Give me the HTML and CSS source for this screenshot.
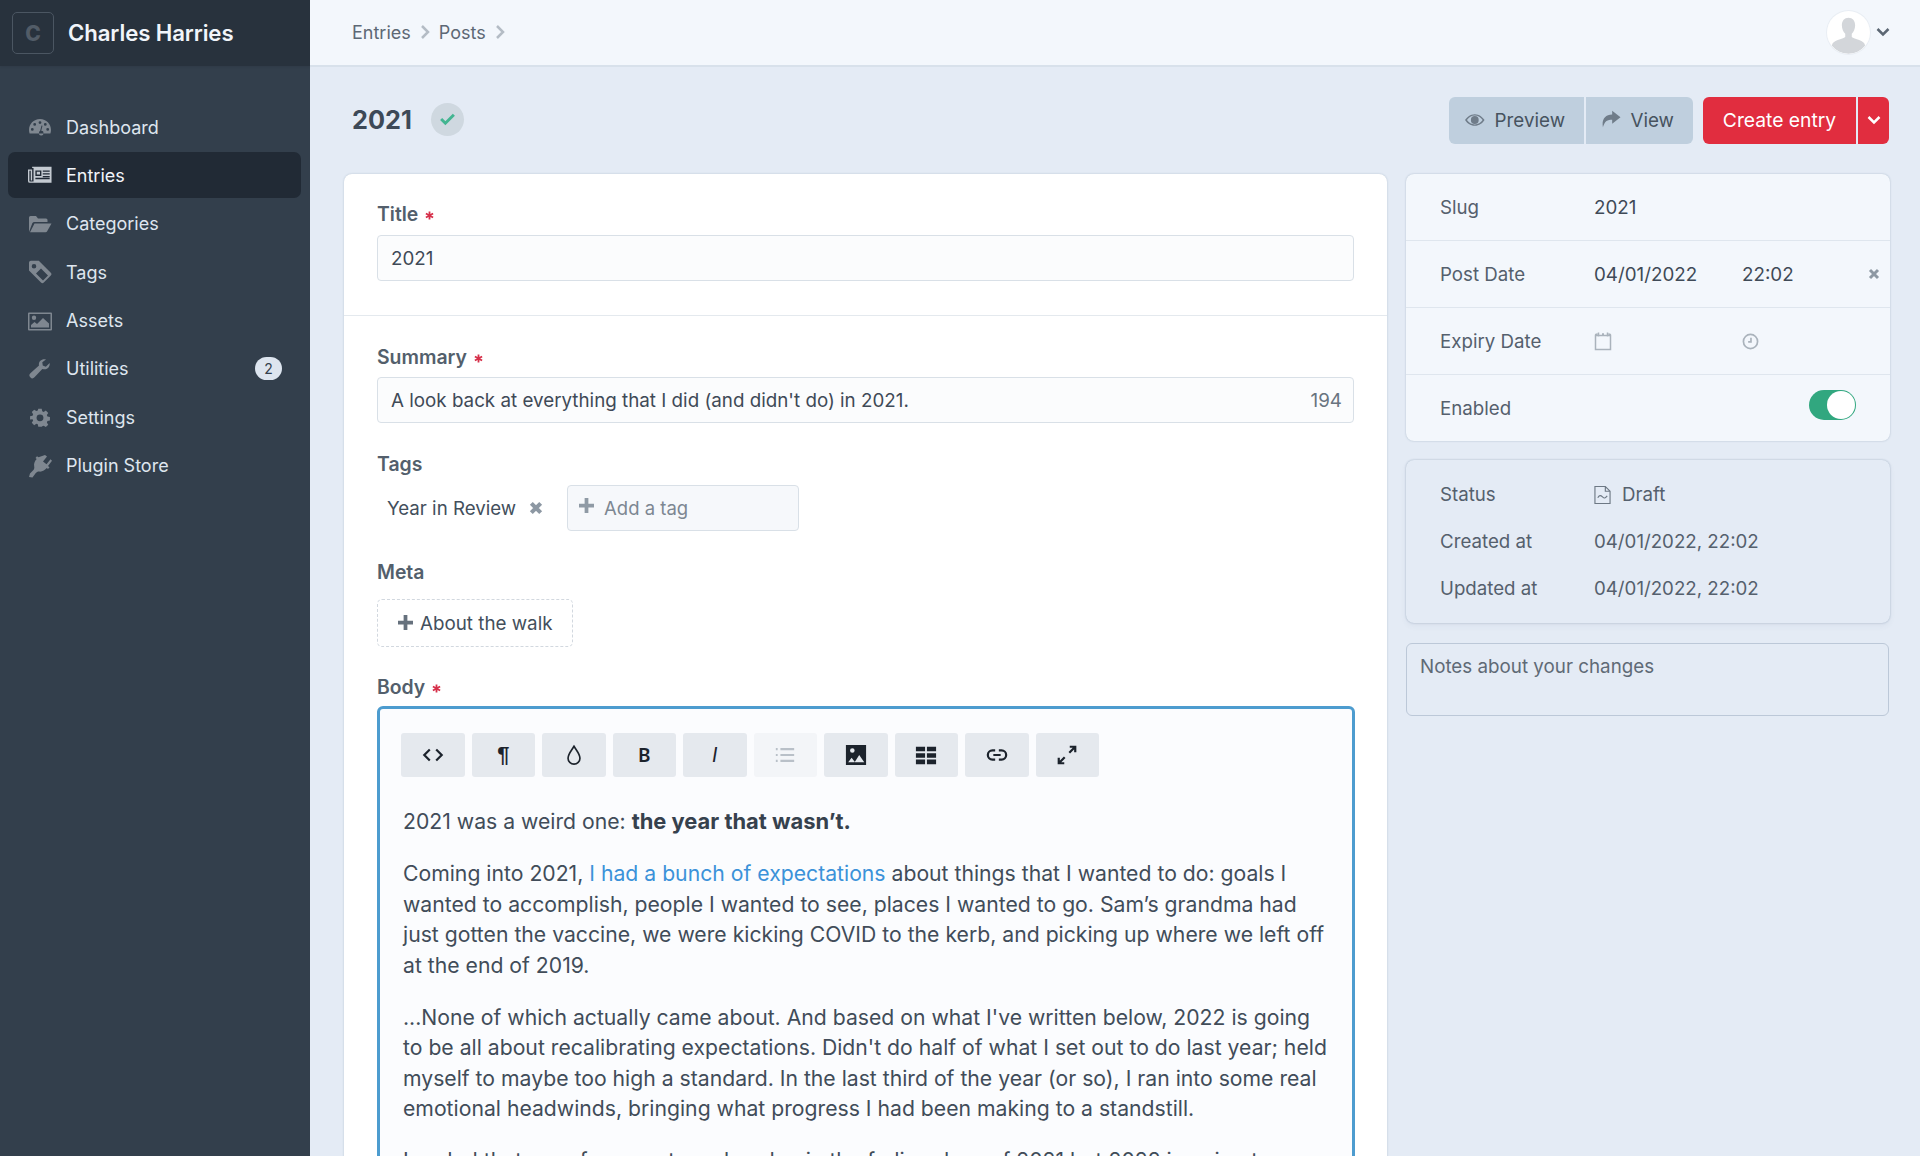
FILE: index.html
```html
<!DOCTYPE html>
<html lang="en">
<head>
<meta charset="utf-8">
<title>Charles Harries</title>
<link rel="stylesheet" href="styles.css">
</head>
<body>
<div class="app">
  <aside class="sidebar">
    <div class="brand">
      <span class="logo">C</span>
      <span class="brand-name">Charles Harries</span>
    </div>
    <nav class="nav">
      <a class="nav-item"><svg class="nav-icon" viewBox="0 0 24 24"><path fill-rule="evenodd" d="M12 4C5.500 4 1 9 1 15c0 1.300.2 2.500.6 3.500h20.800c.4-1 .6-2.200.6-3.500C23 9 18.500 4 12 4zM12 6.200a1.400 1.400 0 1 1 0 2.800 1.400 1.400 0 0 1 0-2.800zM6.700 8a1.400 1.400 0 1 1 0 2.800 1.400 1.400 0 0 1 0-2.800zM17.300 8a1.400 1.400 0 1 1 0 2.800 1.400 1.400 0 0 1 0-2.800zM4.300 13a1.400 1.400 0 1 1 0 2.800 1.400 1.400 0 0 1 0-2.800zM19.700 13a1.400 1.400 0 1 1 0 2.800 1.400 1.400 0 0 1 0-2.800zM13.500 10.500l1 .3-1.300 5a2.300 2.300 0 1 1-2.200 1.900 2.300 2.300 0 0 1 1.200-2z"/></svg><span>Dashboard</span></a>
      <a class="nav-item nav-active"><svg class="nav-icon nav-icon-on" viewBox="0 0 26 24"><path fill-rule="evenodd" d="M4.500 3h21v17.500H2A2 2 0 0 1 0 18.500V6h4.500zM6 4.500v14.500H2a.5.500 0 0 1-.5-.5V7.500H3V18h1.500V4.500zM8 7v6h6.500V7zm1.500 1.500V11.500H13V8.500zM16 7v1.500h7.500V7zm0 3v1.500h7.500V10zm0 3v1.500h7.500V13zM8 15v1.500h15.500V15z"/></svg><span>Entries</span></a>
      <a class="nav-item"><svg class="nav-icon" viewBox="0 0 24 24"><path d="M1 20V5.500A1.500 1.500 0 0 1 2.500 4h5.500l2 2.500h8A1.500 1.500 0 0 1 19.500 8v2H6.500a2.500 2.500 0 0 0-2.200 1.300z"/><path d="M6.500 11.500H23.500L19 19.500a1.500 1.500 0 0 1-1.300.8H2z"/></svg><span>Categories</span></a>
      <a class="nav-item"><svg class="nav-icon" viewBox="0 0 24 24"><path fill-rule="evenodd" d="M1 2.500v8l12 12a2 2 0 0 0 2.800 0l7-7a2 2 0 0 0 0-2.800l-12-12h-8A2 2 0 0 0 1 2.500zM6 4a2.300 2.300 0 1 1 0 4.600A2.300 2.300 0 0 1 6 4zM13 8.500l7 7-5 5-7-7z"/></svg><span>Tags</span></a>
      <a class="nav-item"><svg class="nav-icon" viewBox="0 0 24 24"><path fill-rule="evenodd" d="M1 3.500h22a1 1 0 0 1 1 1v16a1 1 0 0 1-1 1H1a1 1 0 0 1-1-1v-16a1 1 0 0 1 1-1zM1.500 5v15h21V5zM6 6.500a2.200 2.200 0 1 1 0 4.400A2.200 2.200 0 0 1 6 6.500zM3 18.500v-2.500l3.500-3 2.500 2 6-6 6 5.500v4z"/></svg><span>Assets</span></a>
      <a class="nav-item"><svg class="nav-icon" viewBox="-1 -1 26 26"><path d="M22.500 5.500c.3 2.500-.7 5-3 6.200-1.700.9-3.500.8-5 .2L6 21a3 3 0 0 1-4.500-.1 3 3 0 0 1 .1-4.300l9.300-8.400c-.4-1.800 0-3.700 1.500-5.100C14 1.500 16.500 1 18.500 1.800l-4 3 .5 3.500 3.300 1.300z"/></svg><span>Utilities</span><span class="badge">2</span></a>
      <a class="nav-item"><svg class="nav-icon" viewBox="-2 -2.500 28 28"><path fill-rule="evenodd" d="M10 2h4l.6 2.900 1.700.7 2.500-1.600 2.800 2.800-1.600 2.500.7 1.700 2.900.6v4l-2.900.6-.7 1.700 1.600 2.500-2.800 2.800-2.500-1.600-1.700.7L14 23h-4l-.6-2.900-1.700-.7-2.500 1.600-2.800-2.800 1.600-2.500-.7-1.700L.4 14.500v-4l2.900-.6.700-1.700L2.400 5.800 5.200 3l2.500 1.600 1.700-.7zM12 8.500a4 4 0 1 0 0 8 4 4 0 0 0 0-8z"/></svg><span>Settings</span></a>
      <a class="nav-item"><svg class="nav-icon" viewBox="0 0 24 24"><path d="M17 1l2 1.500-4 5 3.500 2.800 4-5L24 6.800l-4 5.200 1.500 1.200-1.500 1.800-1.200-.9c-1.800 2-4.500 3.800-7.500 3.500-1.500-.1-2.500.4-3.700 1.700L4.500 23.500 1 23l1-3.500 3.200-3.300c1-1.200 1.300-2.300 1-3.800-.6-2.800.6-5.400 2.500-7.400L7.500 4l1.500-1.800 1.500 1.100z"/></svg><span>Plugin Store</span></a>
    </nav>
  </aside>

  <div class="main">
    <header class="topbar">
      <div class="crumbs">
        <span>Entries</span>
        <svg class="crumb-sep" viewBox="0 0 10 16"><path d="M2 2l6 6-6 6"/></svg>
        <span>Posts</span>
        <svg class="crumb-sep" viewBox="0 0 10 16"><path d="M2 2l6 6-6 6"/></svg>
      </div>
      <div class="user">
        <span class="avatar"><svg viewBox="0 0 42 42"><path d="M21 6.500c4 0 6.500 3 6.500 7.500 0 3.500-1.500 6.500-3.300 8.300v3.200c2 2 13 3 13 8.500a20.800 20.800 0 0 1-32.400 0c0-5.500 11-6.500 13-8.500v-3.200c-1.800-1.800-3.300-4.800-3.300-8.300 0-4.500 2.500-7.500 6.500-7.500z"/></svg></span>
        <svg class="user-caret" viewBox="0 0 14 10"><path d="M1.500 2l5.500 5.500L12.500 2"/></svg>
      </div>
    </header>

    <div class="content">
      <div class="head">
        <div class="head-title">
          <h1>2021</h1>
          <span class="status-dot"><svg viewBox="0 0 20 16"><path d="M2.500 8l5 5 10-10"/></svg></span>
        </div>
        <div class="actions">
          <div class="btn-group">
            <button class="btn btn-soft"><svg class="btn-eye" viewBox="0 0 20 14"><path fill-rule="evenodd" d="M10 1C5.500 1 2 4 0 7c2 3 5.500 6 10 6s8-3 10-6c-2-3-5.500-6-10-6zM10 2.500c3.300 0 6.200 1.900 8 4.500-1.800 2.600-4.700 4.500-8 4.500S3.800 9.600 2 7c1.800-2.600 4.700-4.500 8-4.500zM10 3a4 4 0 1 0 0 8 4 4 0 0 0 0-8z"/></svg>Preview</button>
            <button class="btn btn-soft btn-view"><svg class="btn-share" viewBox="0 0 20 18"><path d="M11 0l9 7-9 7V9.800C6 9.800 3 11 1 18c-1.500-8 2-13.800 10-13.800z"/></svg>View</button>
          </div>
          <div class="btn-group">
            <button class="btn btn-red">Create entry</button>
            <button class="btn btn-red btn-caret"><svg viewBox="0 0 14 10"><path d="M1.500 2l5.500 5.500L12.500 2"/></svg></button>
          </div>
        </div>
      </div>

      <div class="columns">
        <section class="card">
          <div class="section section-first">
            <label class="label">Title <svg class="req" viewBox="0 0 10 10"><path d="M5 .5v9M1 2.700l8 4.600M9 2.700l-8 4.600"/></svg></label>
            <div class="input">2021</div>
          </div>
          <div class="section">
            <div class="field">
              <label class="label">Summary <svg class="req" viewBox="0 0 10 10"><path d="M5 .5v9M1 2.700l8 4.600M9 2.700l-8 4.600"/></svg></label>
              <div class="input input-count"><span>A look back at everything that I did (and didn't do) in 2021.</span><span class="count">194</span></div>
            </div>
            <div class="field">
              <label class="label label-tags">Tags</label>
              <div class="tag-row">
                <span class="tag">Year in Review <svg class="x-icon" viewBox="0 0 12 12"><path d="M2 2l8 8M10 2l-8 8"/></svg></span>
                <span class="tag-input"><svg class="plus" viewBox="0 0 14 14"><path d="M7 0v14M0 7h14"/></svg>Add a tag</span>
              </div>
            </div>
            <div class="field field-meta">
              <label class="label label-meta">Meta</label>
              <button class="add-set"><svg class="plus plus-dark" viewBox="0 0 14 14"><path d="M7 0v14M0 7h14"/></svg>About the walk</button>
            </div>
            <div class="field">
              <label class="label label-body">Body <svg class="req" viewBox="0 0 10 10"><path d="M5 .5v9M1 2.700l8 4.600M9 2.700l-8 4.600"/></svg></label>
              <div class="editor">
                <div class="toolbar">
                  <span class="tool"><svg viewBox="0 0 24 24"><path class="st" d="M8.500 6l-6 6 6 6M15.500 6l6 6-6 6"/></svg></span>
                  <span class="tool tool-text">¶</span>
                  <span class="tool"><svg viewBox="0 0 24 24"><path class="st st-thin" d="M12 2.500c3 5 6.500 8.500 6.500 13a6.500 6.500 0 0 1-13 0c0-4.500 3.500-8 6.500-13z"/></svg></span>
                  <span class="tool tool-b">B</span>
                  <span class="tool tool-i">I</span>
                  <span class="tool tool-off"><svg viewBox="0 0 24 24"><path class="st st-off" d="M7 5.500h15M7 12h15M7 18.500h15M2 5.500h2M2 12h2M2 18.500h2"/></svg></span>
                  <span class="tool"><svg viewBox="0 0 24 24"><path class="fl" fill-rule="evenodd" d="M1 1h22v22H1zM8 4.500a2.500 2.500 0 1 0 0 5 2.500 2.500 0 0 0 0-5zM7.200 15L3.500 20h7.500zM15.500 12l-5 8h10.500z"/></svg></span>
                  <span class="tool"><svg viewBox="0 0 24 24"><path class="fl" d="M1 3h10v5H1zM13 3h10v5H13zM1 10h10v5H1zM13 10h10v5H13zM1 17h10v5H1zM13 17h10v5H13z"/></svg></span>
                  <span class="tool"><svg viewBox="0 0 24 24"><path class="st" d="M10 7H7a5 5 0 0 0 0 10h3M14 7h3a5 5 0 0 1 0 10h-3M8 12h8"/></svg></span>
                  <span class="tool"><svg viewBox="0 0 24 24"><path class="st" d="M14.500 9.500L21 3M15 3h6v6M9.500 14.500L3 21M3 15v6h6"/></svg></span>
                </div>
                <div class="prose">
                  <p>2021 was a weird one: <strong>the year that wasn’t.</strong></p>
                  <p>Coming into 2021, <a>I had a bunch of expectations</a> about things that I wanted to do: goals I wanted to accomplish, people I wanted to see, places I wanted to go. Sam’s grandma had just gotten the vaccine, we were kicking COVID to the kerb, and picking up where we left off at the end of 2019.</p>
                  <p>...None of which actually came about. And based on what I've written below, 2022 is going to be all about recalibrating expectations. Didn't do half of what I set out to do last year; held myself to maybe too high a standard. In the last third of the year (or so), I ran into some real emotional headwinds, bringing what progress I had been making to a standstill.</p>
                  <p>I ended that run of momentum abandon in the fading days of 2021 but 2022 is going to</p>
                </div>
              </div>
            </div>
          </div>
        </section>

        <aside class="side">
          <div class="side-card">
            <div class="side-row"><span class="side-label">Slug</span><span class="side-value">2021</span></div>
            <div class="side-row">
              <span class="side-label">Post Date</span>
              <span class="side-value side-date">04/01/2022</span>
              <span class="side-value side-time">22:02</span>
              <svg class="x-icon x-date" viewBox="0 0 12 12"><path d="M2 2l8 8M10 2l-8 8"/></svg>
            </div>
            <div class="side-row">
              <span class="side-label">Expiry Date</span>
              <span class="side-date"><svg class="mini" viewBox="0 0 18 20"><path d="M1.500 4.500h15v14h-15zM1.500 4.500c0-1.500 1-1.500 2-1.500M16.500 4.500c0-1.500-1-1.500-2-1.500M4.500 1.500v4M8 3h2M13.500 1.500v4"/></svg></span>
              <span class="side-time"><svg class="mini mini-clock" viewBox="0 0 18 18"><circle cx="9" cy="9" r="7.500"/><path d="M9.500 5v4.500H6.500"/></svg></span>
            </div>
            <div class="side-row side-row-last">
              <span class="side-label">Enabled</span>
              <span class="toggle"><span class="knob"></span></span>
            </div>
          </div>
          <div class="meta-card">
            <div class="meta-row"><span class="side-label">Status</span><span class="draft"><svg class="draft-icon" viewBox="0 0 18 20"><path d="M1 1h11l5 5v13H1zM12 1v5h5M4 13c1.500-3 3-3 5-1s3 1.500 5-1"/></svg>Draft</span></div>
            <div class="meta-row"><span class="side-label">Created at</span><span>04/01/2022, 22:02</span></div>
            <div class="meta-row"><span class="side-label">Updated at</span><span>04/01/2022, 22:02</span></div>
          </div>
          <div class="notes">Notes about your changes</div>
        </aside>
      </div>
    </div>
  </div>
</div>
</body>
</html>
```
FILE: styles.css
```css
* { box-sizing: border-box; }
html, body { margin: 0; height: 100%; overflow: hidden; }
body {
  font-family: Inter, "Noto Sans", "Liberation Sans", sans-serif;
  font-size: 18.800px;
  color: #434f5c;
  background: #e4ebf5;
}
.app { display: flex; height: 100vh; overflow: hidden; }

/* Sidebar */
.sidebar { width: 310px; flex: none; background: #333f4c; color: #dfe6ef; }
.brand {
  height: 66px; display: flex; align-items: center; gap: 14px;
  padding: 0 0 2px 12px; background: #28323d; box-shadow: 0 1px 2px rgba(0,0,0,.08);
}
.logo {
  width: 42px; height: 42px; border: 1.500px solid #4b5662; border-radius: 5px; margin-top: 2px;
  display: flex; align-items: center; justify-content: center;
  color: #525c67; font-size: 21px; font-weight: 800;
}
.brand-name { font-size: 22.200px; font-weight: 600; color: #f1f5fa; letter-spacing: -.1px; }
.nav { display: flex; flex-direction: column; gap: 2.400px; padding: 38px 9px 0 8px; }
.nav-item {
  height: 46px; display: flex; align-items: center; gap: 14px;
  padding: 0 20px; border-radius: 7px; font-size: 18px;
}
.nav-active { background: #212a35; color: #f1f5fa; }
.nav-icon { width: 24px; height: 24px; flex: none; fill: #7f8790; }
.nav-icon-on { fill: #c4cad1; }
.badge {
  margin-left: auto; margin-right: -1px; width: 27px; height: 23px; border-radius: 12px;
  background: #dde5ef; color: #333f4c; font-size: 14px;
  display: flex; align-items: center; justify-content: center;
}

/* Top bar */
.main { flex: 1; min-width: 0; }
.topbar {
  height: 67px; display: flex; align-items: center; justify-content: space-between;
  padding: 0 30px 1px 42px; background: #f3f7fc; border-bottom: 2px solid #d8e1eb;
}
.crumbs { display: flex; align-items: center; gap: 9px; color: #5d6875; font-size: 18px; }
.crumb-sep { width: 10px; height: 16px; fill: none; stroke: #b4bcc5; stroke-width: 2.500; }
.user { display: flex; align-items: center; gap: 6px; }
.avatar {
  width: 43px; height: 43px; border-radius: 50%; background: #fff; overflow: hidden;
  box-shadow: 0 0 0 1px #e9eef4; display: block;
}
.avatar svg { display: block; width: 100%; height: 100%; fill: #d3d6da; }
.user-caret { width: 14px; height: 10px; fill: none; stroke: #5c6773; stroke-width: 2.500; }

/* Content */
.content { padding: 30px 30px 0 34px; }
.head { display: flex; justify-content: space-between; align-items: center; padding-left: 8px; height: 46px; }
.head-title { display: flex; align-items: center; gap: 19px; margin-top: -2px; }
h1 { margin: 0; font-size: 25.300px; font-weight: 700; color: #3d4957; }
.status-dot {
  width: 33px; height: 33px; border-radius: 50%; background: #cfd8e0;
  display: flex; align-items: center; justify-content: center;
}
.status-dot svg { width: 17px; height: 14px; fill: none; stroke: #43b591; stroke-width: 3.500; }
.actions { display: flex; gap: 10px; margin-right: 1px; }
.btn-group { display: flex; gap: 2px; }
.btn {
  height: 47px; border: 0; font: inherit; display: flex; align-items: center; cursor: pointer;
}
.btn-soft { background: #bfcfde; color: #47535f; border-radius: 6px 0 0 6px; padding: 0 19px 0 16px; gap: 10px; width: 135px; }
.btn-view { border-radius: 0 6px 6px 0; width: 107px; gap: 10px; padding-left: 16px; }
.btn-eye { width: 20px; height: 14px; fill: #6f7c89; }
.btn-share { width: 20px; height: 18px; margin-top: -2px; fill: #6f7c89; }
.btn-red { background: #e12d3f; color: #fff; border-radius: 6px 0 0 6px; width: 153px; justify-content: center; font-size: 19.300px; }
.btn-caret { border-radius: 0 6px 6px 0; width: 31px; }
.btn-caret svg { width: 14px; height: 10px; fill: none; stroke: #fff; stroke-width: 2.500; }

.columns { display: grid; grid-template-columns: 1043px 484px; gap: 19px; margin-top: 31px; align-items: start; }

/* Main card */
.card {
  background: #fff; border-radius: 8px; box-shadow: 0 0 2px rgba(60,90,120,.3);
  height: 1100px;
}
.section { padding: 28px 33px 0; }
.section-first { padding-top: 27px; padding-bottom: 34px; border-bottom: 1px solid #e4e9ee; }
.label { display: flex; align-items: center; gap: 7px; height: 25px; margin-bottom: 8px; font-weight: 600; font-size: 19.400px; color: #535f6c; }
.section-first .label { margin-bottom: 9px; }
.label-tags { margin-bottom: 9px; }
.label-body { margin-bottom: 7px; }
.req { width: 9px; height: 9px; margin-top: 3px; fill: none; stroke: #d6304a; stroke-width: 2; }
.field { margin-bottom: 28px; }
.field-meta { margin-bottom: 27px; }
.field:last-child { margin-bottom: 0; }
.input {
  height: 46px; border: 1px solid #d9e0e7; border-radius: 4px; background: #fbfcfd;
  padding: 0 13px; display: flex; align-items: center; color: #3f4a57;
}
.input-count { justify-content: space-between; padding-right: 11px; }
.count { color: #69747f; }
.tag-row { display: flex; align-items: center; height: 46px; gap: 24px; }
.tag { display: flex; align-items: center; gap: 13px; padding-left: 10px; color: #434f5c; font-size: 18.700px; }
.x-icon { width: 14px; height: 14px; fill: none; stroke: #8d98a3; stroke-width: 3.500; }
.tag-input {
  width: 232px; height: 46px; border: 1px solid #d9e0e7; border-radius: 4px; background: #f6f8fb;
  display: flex; align-items: center; gap: 10px; padding-left: 11px; color: #7d8792; font-size: 18.500px;
}
.plus { width: 15px; height: 15px; margin-top: -5px; fill: none; stroke: #8f9aa5; stroke-width: 3.500; }
.plus-dark { stroke: #66717d; margin-top: -2px; }
.label-meta { margin-bottom: 15px; }
.add-set {
  width: 196px; height: 48px; border: 1.500px dashed #d2d8df; border-radius: 5px; background: #fff;
  display: flex; align-items: center; gap: 7px; padding: 0 0 0 20px; font: inherit; color: #434f5c;
}
.editor {
  width: 978px; border: 3px solid #4d9ccf; border-radius: 6px; background: #fbfcfe;
  padding: 24px 21px 0 23px; height: 600px;
}
.toolbar { display: flex; gap: 7px; margin-left: -2px; }
.tool {
  width: 63.500px; height: 44px; background: #e5e9ee; border-radius: 3px;
  display: flex; align-items: center; justify-content: center; color: #1c232c;
}
.tool svg { width: 22px; height: 22px; }
.tool-off { background: #f3f5f8; }
.tool-text { font-size: 22px; font-family: "Liberation Sans", sans-serif; font-weight: 700; }
.tool-b { font-size: 19px; font-family: "Noto Sans", sans-serif; font-weight: 600; }
.tool-i { font-style: italic; font-size: 20px; font-weight: 400; }
.st { fill: none; stroke: #1c232c; stroke-width: 2.400; }
.st-thin { stroke-width: 1.800; }
.st-off { stroke: #b9c0c8; stroke-width: 2.400; }
.fl { fill: #1c232c; }
.prose { margin-top: 29px; font-size: 21.200px; line-height: 30.500px; color: #414c59; }
.prose p { margin: 0 0 21.500px; }
.prose strong { font-weight: 700; font-size: 21.900px; color: #36414d; }
.prose a { color: #3b92d9; }

/* Side */
.side { display: flex; flex-direction: column; }
.side-card { background: #f3f7fc; border-radius: 8px; box-shadow: 0 0 2px rgba(60,90,120,.35); height: 267px; }
.side-row {
  height: 67px; display: flex; align-items: center; padding: 0 10px 0 34px;
  border-bottom: 1px solid #dfe6ee; position: relative;
}
.side-row-last { border-bottom: 0; height: 66px; justify-content: space-between; padding-right: 34px; }
.side-label { width: 154px; flex: none; color: #55606d; font-size: 18.700px; }
.side-value { color: #3f4a57; }
.side-date { width: 148px; flex: none; display: flex; }
.side-time { flex: 1; display: flex; }
.x-date { width: 12px; height: 12px; stroke-width: 3; }
.mini { width: 18px; height: 20px; fill: none; stroke: #aab3bc; stroke-width: 1.500; }
.mini-clock { width: 17px; height: 17px; stroke-width: 1.800; }
.toggle { width: 47px; height: 30px; background: #31a77f; border-radius: 15px; display: flex; justify-content: flex-end; padding: 1px; margin-top: -6px; }
.knob { width: 28px; height: 28px; background: #fff; border-radius: 50%; }
.meta-card {
  margin-top: 19px; height: 163px; border-radius: 8px; padding: 11px 0 0 34px;
  box-shadow: 0 0 2px rgba(60,90,120,.4), 0 3px 6px rgba(60,90,120,.06);
  font-size: 18.700px;
}
.meta-row { height: 47px; display: flex; align-items: center; color: #55606d; }
.draft { display: flex; align-items: center; gap: 11px; }
.draft-icon { width: 17px; height: 20px; fill: none; stroke: #6d7884; stroke-width: 1.200; }
.notes {
  margin-top: 20px; height: 73px; border: 1px solid #bcc8d8; border-radius: 6px; width: 483px;
  padding: 11px 13px; color: #5f6a76;
}
```
